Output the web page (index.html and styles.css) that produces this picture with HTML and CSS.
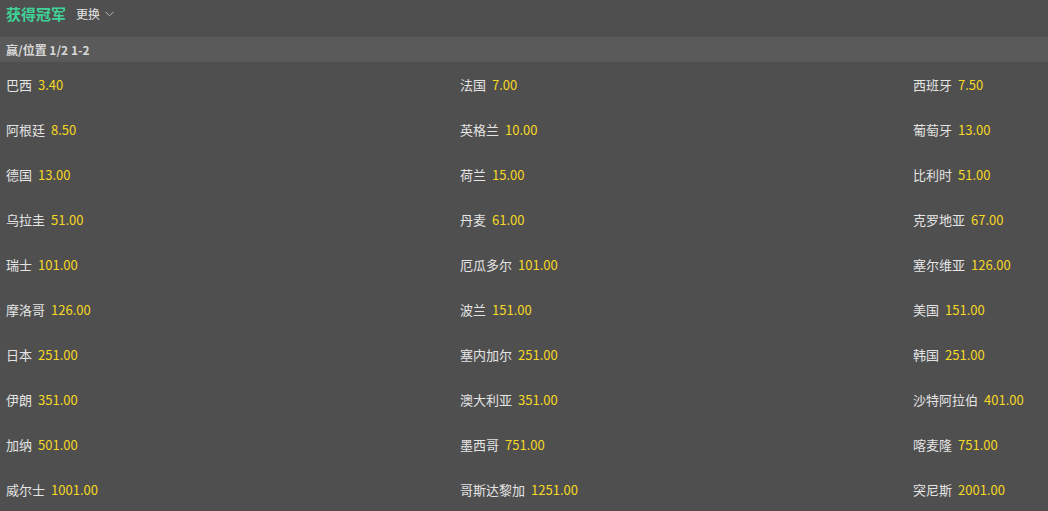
FILE: index.html
```html
<!DOCTYPE html>
<html lang="zh">
<head>
<meta charset="utf-8">
<link rel="stylesheet" href="styles.css">
</head>
<body>
<div class="page">
  <div class="topbar">
    <span class="title">获得冠军</span>
    <span class="switch">更换<svg class="chev" width="9" height="6" viewBox="0 0 9 6"><path d="M0.5 0.8 L4.5 4.8 L8.5 0.8" fill="none" stroke="#b8b8b8" stroke-width="1"/></svg></span>
  </div>
  <div class="band">赢/位置 1/2 1-2</div>
  <div class="grid">
    <div class="cell"><span class="name">巴西</span><span class="odd">3.40</span></div>
    <div class="cell"><span class="name">法国</span><span class="odd">7.00</span></div>
    <div class="cell"><span class="name">西班牙</span><span class="odd">7.50</span></div>
    <div class="cell"><span class="name">阿根廷</span><span class="odd">8.50</span></div>
    <div class="cell"><span class="name">英格兰</span><span class="odd">10.00</span></div>
    <div class="cell"><span class="name">葡萄牙</span><span class="odd">13.00</span></div>
    <div class="cell"><span class="name">德国</span><span class="odd">13.00</span></div>
    <div class="cell"><span class="name">荷兰</span><span class="odd">15.00</span></div>
    <div class="cell"><span class="name">比利时</span><span class="odd">51.00</span></div>
    <div class="cell"><span class="name">乌拉圭</span><span class="odd">51.00</span></div>
    <div class="cell"><span class="name">丹麦</span><span class="odd">61.00</span></div>
    <div class="cell"><span class="name">克罗地亚</span><span class="odd">67.00</span></div>
    <div class="cell"><span class="name">瑞士</span><span class="odd">101.00</span></div>
    <div class="cell"><span class="name">厄瓜多尔</span><span class="odd">101.00</span></div>
    <div class="cell"><span class="name">塞尔维亚</span><span class="odd">126.00</span></div>
    <div class="cell"><span class="name">摩洛哥</span><span class="odd">126.00</span></div>
    <div class="cell"><span class="name">波兰</span><span class="odd">151.00</span></div>
    <div class="cell"><span class="name">美国</span><span class="odd">151.00</span></div>
    <div class="cell"><span class="name">日本</span><span class="odd">251.00</span></div>
    <div class="cell"><span class="name">塞内加尔</span><span class="odd">251.00</span></div>
    <div class="cell"><span class="name">韩国</span><span class="odd">251.00</span></div>
    <div class="cell"><span class="name">伊朗</span><span class="odd">351.00</span></div>
    <div class="cell"><span class="name">澳大利亚</span><span class="odd">351.00</span></div>
    <div class="cell"><span class="name">沙特阿拉伯</span><span class="odd">401.00</span></div>
    <div class="cell"><span class="name">加纳</span><span class="odd">501.00</span></div>
    <div class="cell"><span class="name">墨西哥</span><span class="odd">751.00</span></div>
    <div class="cell"><span class="name">喀麦隆</span><span class="odd">751.00</span></div>
    <div class="cell"><span class="name">威尔士</span><span class="odd">1001.00</span></div>
    <div class="cell"><span class="name">哥斯达黎加</span><span class="odd">1251.00</span></div>
    <div class="cell"><span class="name">突尼斯</span><span class="odd">2001.00</span></div>
  </div>
</div>
</body>
</html>
```
FILE: styles.css
```css
html, body {
  margin: 0;
  padding: 0;
  background: #4f4f4f;
}
body {
  font-family: "Noto Sans CJK SC", "Noto Sans", sans-serif;
  color: #e2e2e2;
  overflow: hidden;
}
.page {
  width: 1048px;
}
.topbar {
  height: 37px;
  display: flex;
  align-items: center;
  padding: 0 6px;
  box-sizing: border-box;
}
.title {
  font-size: 15px;
  font-weight: bold;
  color: #3fd39a;
  margin-top: -10px;
}
.switch {
  font-size: 12px;
  color: #e6e6e6;
  margin-left: 10px;
  margin-top: -10px;
  display: flex;
  align-items: center;
}
.chev {
  margin-left: 5px;
}
.band {
  height: 25px;
  line-height: 25px;
  background: #5a5a5a;
  padding-left: 6px;
  font-size: 12px;
  font-weight: bold;
  color: #d8d8d8;
}
.grid {
  display: grid;
  grid-template-columns: 454px 453px 1fr;
  grid-auto-rows: 45px;
  padding-left: 6px;
}
.cell {
  display: flex;
  align-items: center;
  font-size: 13px;
  white-space: nowrap;
}
.name {
  color: #e4e4e4;
}
.odd {
  color: #f6d823;
  margin-left: 6px;
}
```
